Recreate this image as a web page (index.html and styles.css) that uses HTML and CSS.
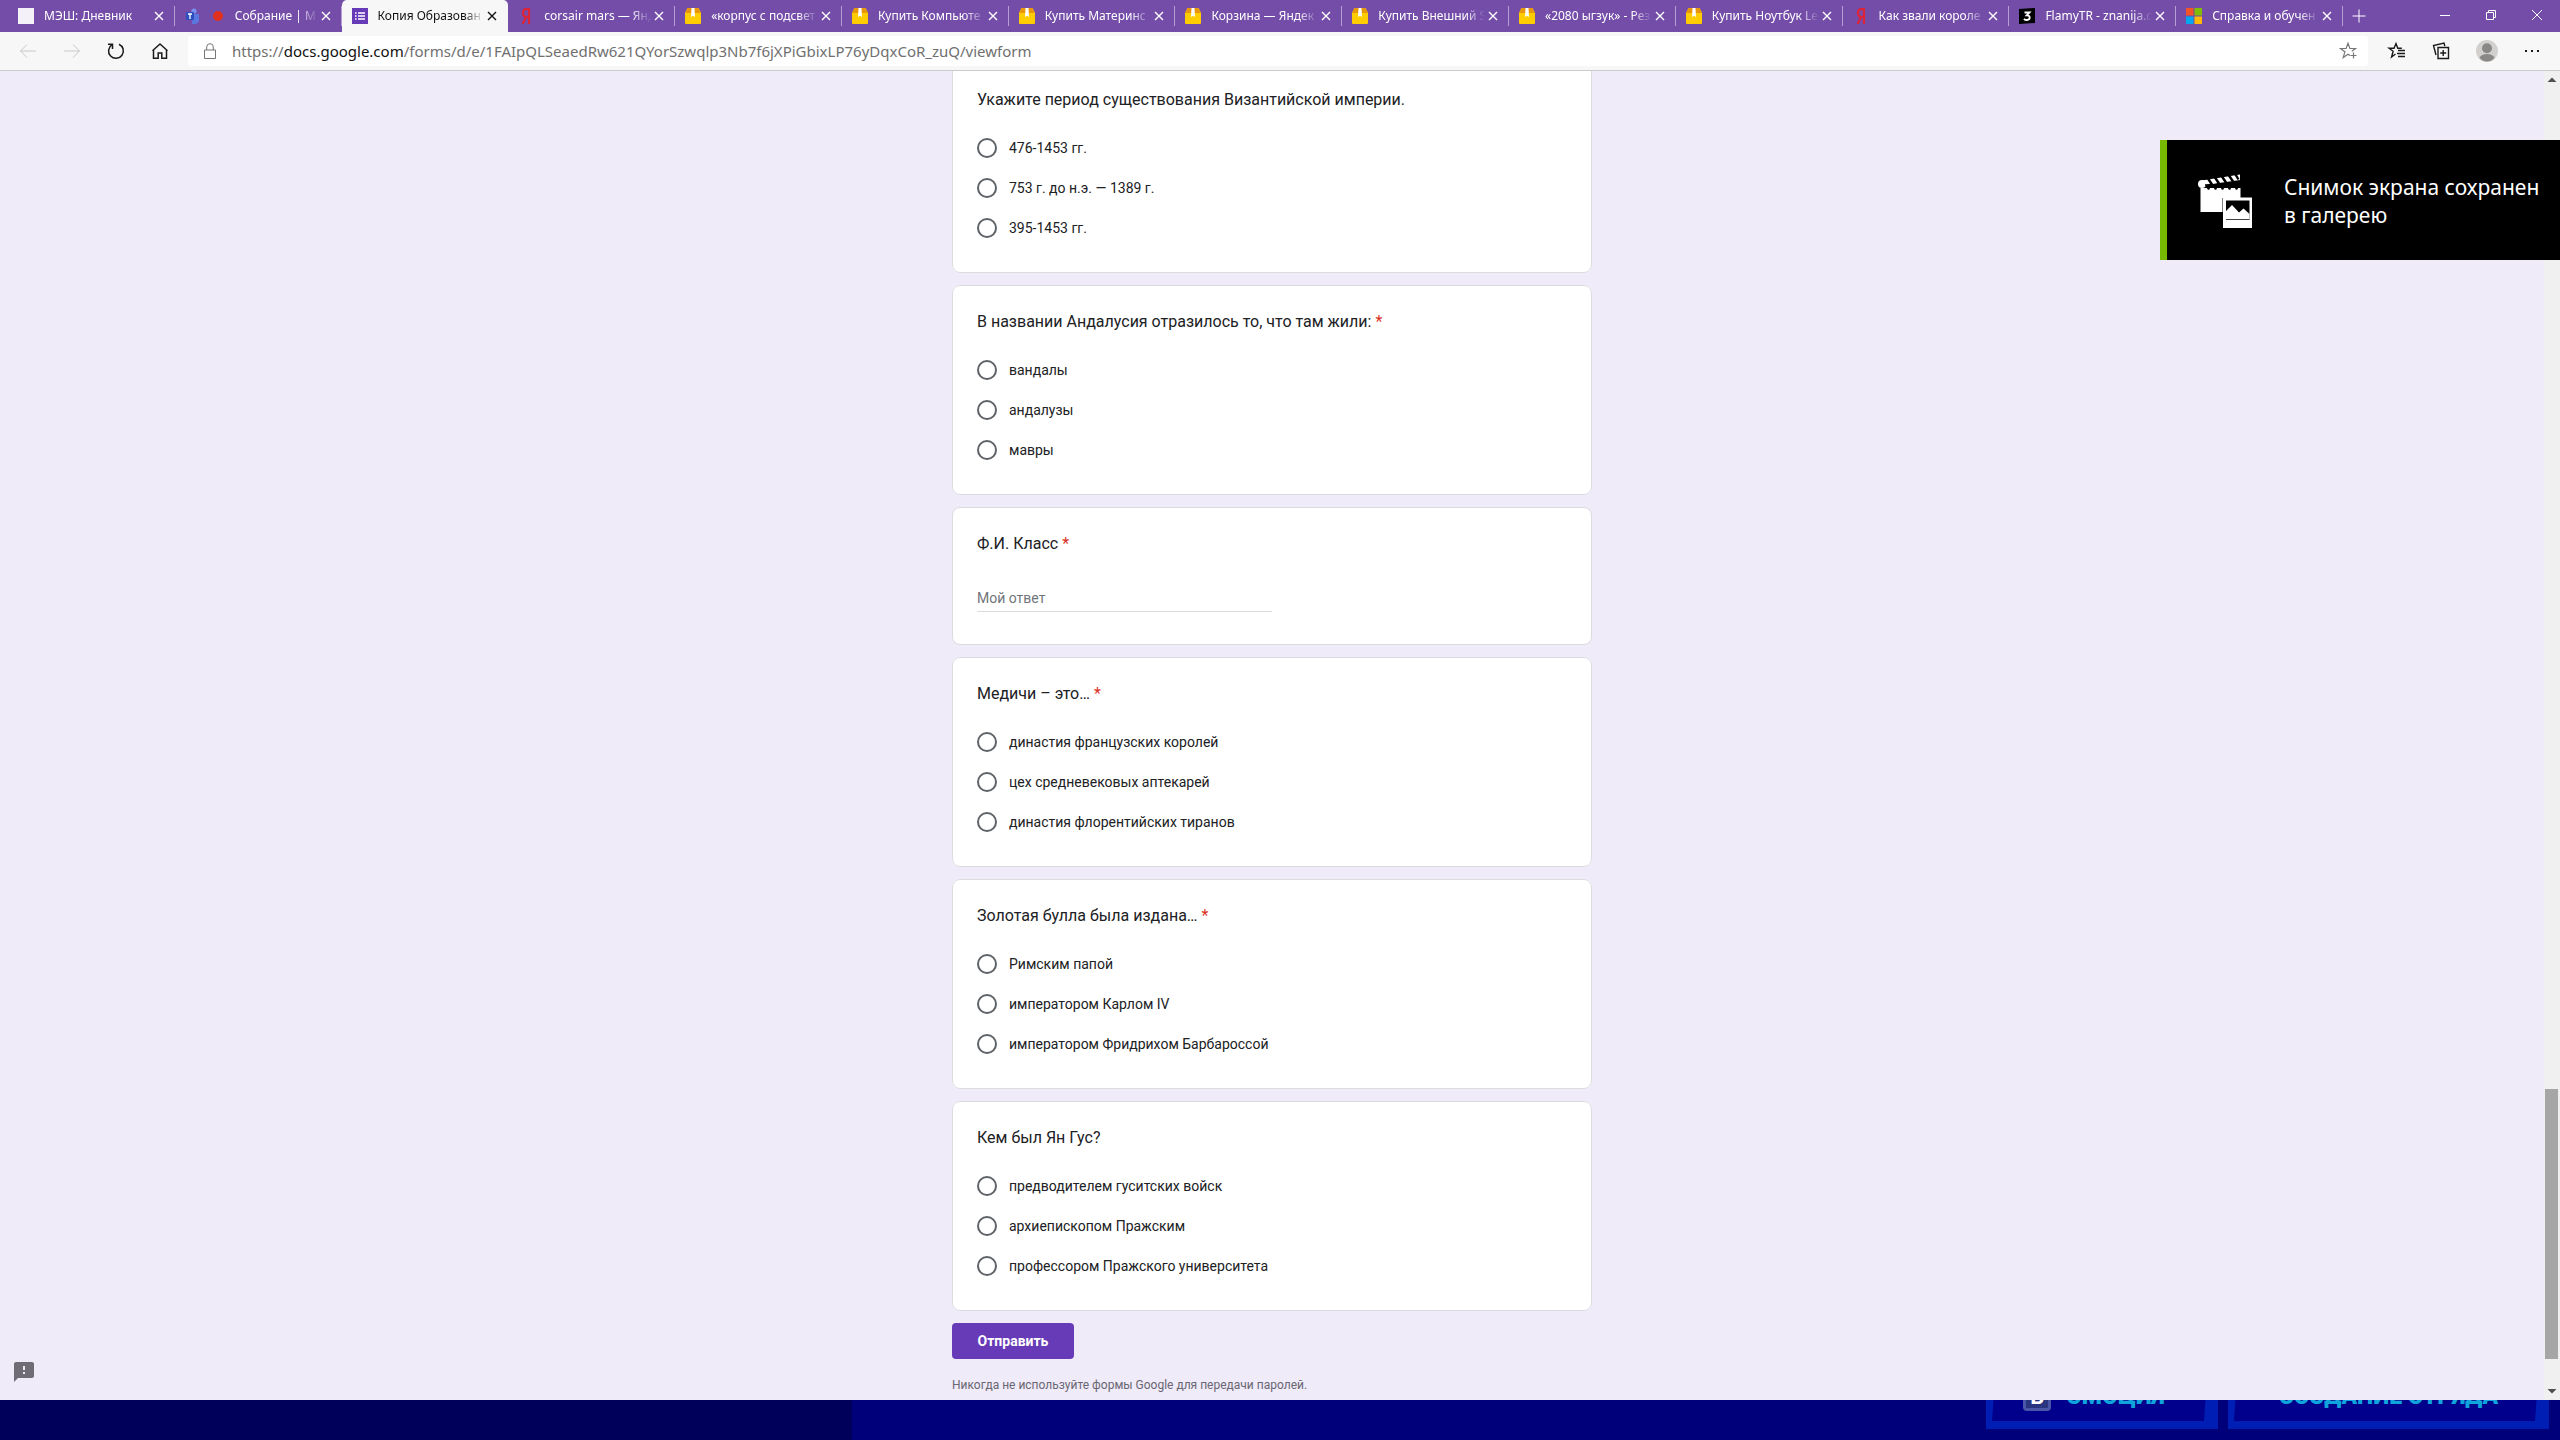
FILE: index.html
```
<!DOCTYPE html>
<html lang="ru">
<head>
<meta charset="utf-8">
<meta name="viewport" content="width=device-width, initial-scale=1">
<title>Копия Образование</title>
<link rel="stylesheet" href="styles.css">
</head>
<body>
<svg class="sprite" aria-hidden="true">
  <symbol id="i-close" viewBox="0 0 16 16"><path d="M4 4l8 8M12 4l-8 8" fill="none" stroke="currentColor" stroke-width="1.4"/></symbol>
  <symbol id="i-box" viewBox="0 0 16 16"><path d="M2.500 0h11L16 5v10q0 1-1 1H1q-1 0-1-1V5z" fill="#fc0"/><path d="M2.500 0h11L16 5H0z" fill="#e8960c"/><path d="M6.500 0h3l.5 9-2-1.200-2 1.200z" fill="#fff"/></symbol>
  <symbol id="i-ya" viewBox="0 0 16 16"><path d="M11 0v16M11 1.200H8.500C6 1.200 5 2.800 5 5s1.500 3.800 3.500 3.800H11M8.200 8.800L4.600 16" fill="none" stroke="#dc2438" stroke-width="2.200"/></symbol>
</svg>

<header class="browser">
  <div class="strip">
    <nav class="tabs" aria-label="Вкладки">
      <div class="tab"><svg class="fav" viewBox="0 0 16 16"><rect width="16" height="16" fill="#f4f1f8"/></svg><a href="#">МЭШ: Дневник</a><button aria-label="Закрыть"><svg><use href="#i-close"/></svg></button></div>
      <div class="tab"><svg class="fav" viewBox="0 0 16 16"><circle cx="9" cy="3" r="2.600" fill="#7b8ff0"/><path d="M8 6h6v6q0 3-4 4H7z" fill="#5b78e0"/><rect x="1" y="4" width="8" height="8" rx="1" fill="#2d4fc0"/><path d="M3 6h4M5 6v5" stroke="#fff" stroke-width="1.300"/></svg><svg class="fav" viewBox="0 0 16 16"><circle cx="9" cy="8" r="5" fill="#e0301e"/></svg><a href="#">Собрание | M</a><button aria-label="Закрыть"><svg><use href="#i-close"/></svg></button></div>
      <div class="tab active"><svg class="fav" viewBox="0 0 16 16"><rect width="16" height="16" fill="#673ab7"/><path d="M6 5h7M6 8h7M6 11h7M3 5h1.600M3 8h1.600M3 11h1.600" stroke="#fff" stroke-width="1.500"/></svg><a href="#">Копия Образован</a><button aria-label="Закрыть"><svg><use href="#i-close"/></svg></button></div>
      <div class="tab"><svg class="fav"><use href="#i-ya"/></svg><a href="#">corsair mars — Янд</a><button aria-label="Закрыть"><svg><use href="#i-close"/></svg></button></div>
      <div class="tab"><svg class="fav"><use href="#i-box"/></svg><a href="#">«корпус с подсвет</a><button aria-label="Закрыть"><svg><use href="#i-close"/></svg></button></div>
      <div class="tab"><svg class="fav"><use href="#i-box"/></svg><a href="#">Купить Компьюте</a><button aria-label="Закрыть"><svg><use href="#i-close"/></svg></button></div>
      <div class="tab"><svg class="fav"><use href="#i-box"/></svg><a href="#">Купить Материнс</a><button aria-label="Закрыть"><svg><use href="#i-close"/></svg></button></div>
      <div class="tab"><svg class="fav"><use href="#i-box"/></svg><a href="#">Корзина — Яндек</a><button aria-label="Закрыть"><svg><use href="#i-close"/></svg></button></div>
      <div class="tab"><svg class="fav"><use href="#i-box"/></svg><a href="#">Купить Внешний S</a><button aria-label="Закрыть"><svg><use href="#i-close"/></svg></button></div>
      <div class="tab"><svg class="fav"><use href="#i-box"/></svg><a href="#">«2080 ыгзук» - Рез</a><button aria-label="Закрыть"><svg><use href="#i-close"/></svg></button></div>
      <div class="tab"><svg class="fav"><use href="#i-box"/></svg><a href="#">Купить Ноутбук Le</a><button aria-label="Закрыть"><svg><use href="#i-close"/></svg></button></div>
      <div class="tab"><svg class="fav"><use href="#i-ya"/></svg><a href="#">Как звали короле</a><button aria-label="Закрыть"><svg><use href="#i-close"/></svg></button></div>
      <div class="tab"><svg class="fav" viewBox="0 0 16 16"><path d="M0 1l16-1v15L0 16z" fill="#000"/><path d="M5.500 4.500h5L7.700 7.300q3 0 3 2.300T8 12q-2 0-3-1.200" fill="none" stroke="#fff" stroke-width="1.800"/></svg><a href="#">FlamyTR - znanija.c</a><button aria-label="Закрыть"><svg><use href="#i-close"/></svg></button></div>
      <div class="tab"><svg class="fav" viewBox="0 0 16 16"><path fill="#f35325" d="M0 0h7.500v7.500H0z"/><path fill="#81bc06" d="M8.500 0H16v7.500H8.500z"/><path fill="#05a6f0" d="M0 8.500h7.500V16H0z"/><path fill="#ffba08" d="M8.500 8.500H16V16H8.500z"/></svg><a href="#">Справка и обучен</a><button aria-label="Закрыть"><svg><use href="#i-close"/></svg></button></div>
    </nav>
    <button class="newtab" aria-label="Новая вкладка"><svg viewBox="0 0 16 16"><path d="M8 1.500v13M1.500 8h13"/></svg></button>
    <div class="wincontrols">
      <button aria-label="Свернуть"><svg viewBox="0 0 16 16"><path d="M3 8.500h10"/></svg></button>
      <button aria-label="Окно"><svg viewBox="0 0 16 16"><path d="M3.500 5.500h7v7h-7zM5.500 5.500v-2h7v7h-2"/></svg></button>
      <button aria-label="Закрыть окно"><svg viewBox="0 0 16 16"><path d="M3 3l10 10M13 3L3 13"/></svg></button>
    </div>
  </div>
  <div class="toolbar">
    <div class="nav">
      <button class="off" aria-label="Назад"><svg viewBox="0 0 20 20"><path d="M18 10H2.500M9 3.500L2.500 10 9 16.500"/></svg></button>
      <button class="off" aria-label="Вперёд"><svg viewBox="0 0 20 20"><path d="M2 10h15.500M11 3.500l6.500 6.500-6.500 6.500"/></svg></button>
      <button aria-label="Обновить"><svg viewBox="0 0 20 20"><path d="M13 3.200A7.400 7.400 0 1 1 6 3.700M6.500 8V3.200H2" stroke-width="1.500"/></svg></button>
      <button aria-label="Домой"><svg viewBox="0 0 20 20"><path d="M3.500 9v8.300h4.700V12h3.600v5.300h4.700V9M2.500 9.800L10 3l7.500 6.800" stroke-width="1.500"/></svg></button>
    </div>
    <div class="address">
      <svg class="lock" viewBox="0 0 20 20"><path d="M4.500 9h11v8.500h-11zM6.700 9V6q0-3.300 3.300-3.300T13.300 6v3"/></svg>
      <div class="url" role="textbox" aria-label="Адрес">https://<b>docs.google.com</b>/forms/d/e/1FAIpQLSeaedRw621QYorSzwqlp3Nb7f6jXPiGbixLP76yDqxCoR_zuQ/viewform</div>
      <button class="star" aria-label="В избранное"><svg viewBox="0 0 20 20"><path d="M12 14.600l-2-1.400L5.200 16.500l1.700-5.700L2.500 7.500h5.600L10 2.200l1.900 5.300h5.600l-3.700 2.800M15.500 11.500v6M12.500 14.500h6" stroke-width="1.200"/></svg></button>
    </div>
    <div class="actions">
      <button aria-label="Избранное"><svg viewBox="0 0 20 20"><path d="M8.500 13L4.600 16l1.500-5.700L2 7.200h5L9 2.500l1.800 4.700h4M11 9.500h7M10 12.500h8M11 15.500h7" stroke-width="1.400"/></svg></button>
      <button aria-label="Коллекции"><svg viewBox="0 0 20 20"><path d="M6 6.500h10.500v11H6zM11.200 9v6M8.200 12h6M4 14L1.500 4.500 12 2l.8 3" stroke-width="1.400"/></svg></button>
      <button aria-label="Профиль"><svg class="avatar" viewBox="0 0 22 22"><circle cx="11" cy="11" r="11" fill="#d2d0ce"/><circle cx="11" cy="8.200" r="5" fill="#8a8886"/><path d="M3.500 17.500q2-3.500 7.500-3.500t7.500 3.500Q16 21.500 11 21.500t-7.500-4z" fill="#8a8886"/></svg></button>
      <button aria-label="Меню"><svg viewBox="0 0 20 20"><path d="M3 10h2M9 10h2M15 10h2" stroke-width="2"/></svg></button>
    </div>
  </div>
</header>

<div class="viewport">
  <main class="page">
    <form class="form">
      <fieldset class="card">
        <legend>Укажите период существования Византийской империи.</legend>
        <label class="option"><input type="radio" name="q1">476-1453 гг.</label>
        <label class="option"><input type="radio" name="q1">753 г. до н.э. — 1389 г.</label>
        <label class="option"><input type="radio" name="q1">395-1453 гг.</label>
      </fieldset>
      <fieldset class="card">
        <legend>В названии Андалусия отразилось то, что там жили: <span class="req">*</span></legend>
        <label class="option"><input type="radio" name="q2">вандалы</label>
        <label class="option"><input type="radio" name="q2">андалузы</label>
        <label class="option"><input type="radio" name="q2">мавры</label>
      </fieldset>
      <div class="card">
        <label class="title" for="fio">Ф.И. Класс <span class="req">*</span></label>
        <input class="answer" id="fio" type="text" placeholder="Мой ответ">
      </div>
      <fieldset class="card">
        <legend>Медичи – это… <span class="req">*</span></legend>
        <label class="option"><input type="radio" name="q4">династия французских королей</label>
        <label class="option"><input type="radio" name="q4">цех средневековых аптекарей</label>
        <label class="option"><input type="radio" name="q4">династия флорентийских тиранов</label>
      </fieldset>
      <fieldset class="card">
        <legend>Золотая булла была издана… <span class="req">*</span></legend>
        <label class="option"><input type="radio" name="q5">Римским папой</label>
        <label class="option"><input type="radio" name="q5">императором Карлом IV</label>
        <label class="option"><input type="radio" name="q5">императором Фридрихом Барбароссой</label>
      </fieldset>
      <fieldset class="card">
        <legend>Кем был Ян Гус?</legend>
        <label class="option"><input type="radio" name="q6">предводителем гуситских войск</label>
        <label class="option"><input type="radio" name="q6">архиепископом Пражским</label>
        <label class="option"><input type="radio" name="q6">профессором Пражского университета</label>
      </fieldset>
      <button class="submit" type="submit">Отправить</button>
      <p class="note">Никогда не используйте формы Google для передачи паролей.</p>
    </form>
    <button class="feedback" aria-label="Сообщить о проблеме"><svg viewBox="0 0 24 24"><path fill="#6f6c76" d="M20 2H4c-1.100 0-2 .9-2 2v18l4-4h14c1.100 0 2-.9 2-2V4c0-1.100-.9-2-2-2zm-7 12h-2v-2h2v2zm0-4h-2V6h2v4z"/></svg></button>
  </main>
  <div class="scrollbar" aria-hidden="true">
    <svg viewBox="0 0 16 17"><path d="M3.500 11L8 6.500l4.500 4.500z"/></svg>
    <div class="track"><div class="thumb"></div></div>
    <svg viewBox="0 0 16 17"><path d="M3.500 6L8 10.500 12.500 6z"/></svg>
  </div>
</div>

<footer class="game">
  <button class="gbtn keyed"><kbd>B</kbd><span>ЭМОЦИЯ</span></button>
  <button class="gbtn wide"><span>СОЗДАНИЕ ОТРЯДА</span></button>
</footer>

<aside class="toast" role="status">
  <svg viewBox="0 0 54 54"><g fill="#fff"><path d="M2.500 14h40v10H24.500v14h-22z"/><circle cx="4" cy="10" r="4"/><path d="M4 6.500L42 .5v5.500L4 11.500z"/><path d="M25 23.500h29V54H25z"/></g><path d="M10 4.500l4 6M17 3.500l4 6M24 2.500l4 6M31 1.500l4 6M37.500.5l3 5M13 9.500l-3 6M20 9.500l-3 6M27 9.500l-3 6M34 9.500l-3 6M41 9.500l-3 6" stroke="#000" stroke-width="2.400"/><path d="M7 11l35-1" stroke="#000" stroke-width="1.500"/><path d="M28 26.500h23.500V46H28z"/><path d="M28 45.200V37l6-6 7 7.500 4.500-4 6 5.500v5.200z" fill="#fff"/></svg>
  <p>Снимок экрана сохранен<br>в галерею</p>
</aside>
</body>
</html>
```
FILE: styles.css
```
* { box-sizing: border-box; }

body {
  margin: 0;
  min-height: 100vh;
  display: flex;
  flex-direction: column;
  position: relative;
  font-family: Roboto, "Liberation Sans", sans-serif;
  background: #00007a;
}

button {
  margin: 0;
  padding: 0;
  border: 0;
  background: none;
  font: inherit;
  color: inherit;
  display: flex;
  align-items: center;
  justify-content: center;
}

.sprite { display: none; }

/* Browser chrome */
.browser {
  font-family: "Noto Sans", "Open Sans", sans-serif;
  background: #f7f7f7;
  border-bottom: 1px solid #cbcacd;
}

.strip {
  display: flex;
  height: 32px;
  padding-left: 8px;
  background: #744da9;
  color: #fff;
}

.tabs {
  flex: 1;
  min-width: 0;
  display: flex;
}

.tab {
  flex: 1 1 0;
  min-width: 0;
  display: flex;
  align-items: center;
  padding: 0 8px 0 10px;
  background: linear-gradient(#b79fd6, #b79fd6) right center / 1px 20px no-repeat;
}

.fav {
  flex: none;
  width: 16px;
  height: 16px;
}

.fav + .fav { margin-left: 8px; }

.tab a {
  flex: 1;
  min-width: 0;
  margin-left: 10px;
  overflow: hidden;
  white-space: nowrap;
  font-size: 12px;
  line-height: 20px;
  color: inherit;
  text-decoration: none;
  mask-image: linear-gradient(to left, transparent, #000 20px);
}

.tab button, .tab button svg {
  flex: none;
  width: 16px;
  height: 16px;
}

.tab.active {
  color: #111;
  background: #f7f7f7;
  border-radius: 5px 5px 0 0;
}

.newtab {
  width: 32px;
  margin-right: 47px;
}

.newtab svg, .wincontrols svg {
  width: 16px;
  height: 16px;
  fill: none;
  stroke: currentColor;
}

.wincontrols { display: flex; height: 30px; }
.wincontrols button { width: 46px; }

.toolbar {
  display: flex;
  height: 38px;
  align-items: center;
  padding: 0 6px;
}

.nav, .actions { display: flex; }
.nav button { width: 44px; }
.actions button { width: 45px; }

.toolbar svg {
  width: 20px;
  height: 20px;
  fill: none;
  stroke: #1a1a1a;
}

.toolbar .avatar {
  width: 22px;
  height: 22px;
  stroke: none;
}

.toolbar .off svg { stroke: #c8c8c8; }

.address {
  flex: 1;
  min-width: 0;
  height: 30px;
  margin: 0 6px;
  padding: 0 10px 0 12px;
  display: flex;
  align-items: center;
  background: #fff;
  border-radius: 3px;
}

.toolbar .address svg { stroke: #767676; }

.url {
  flex: 1;
  min-width: 0;
  margin-left: 12px;
  overflow: hidden;
  white-space: nowrap;
  font-size: 15px;
  line-height: 24px;
  color: #707070;
}

.url b { font-weight: 400; color: #111; }

/* Page area */
.viewport {
  flex: 1;
  display: flex;
  overflow: hidden;
  background: #efebf8;
}

.page {
  flex: 1;
  position: relative;
}

.form {
  max-width: 640px;
  margin: -8px auto 0;
  display: flex;
  flex-direction: column;
  gap: 12px;
}

.card {
  margin: 0;
  min-width: 0;
  padding: 24px;
  background: #fff;
  border: 1px solid #dadce0;
  border-radius: 8px;
  font-size: 14px;
  color: #202124;
}

.card legend, .title {
  display: block;
  float: left;
  width: 100%;
  padding: 0;
  margin-bottom: 16px;
  font-size: 16px;
  line-height: 24px;
}

.req { color: #d93025; }

.option {
  clear: both;
  height: 40px;
  display: flex;
  align-items: center;
  gap: 12px;
}

.option input {
  appearance: none;
  flex: none;
  width: 20px;
  height: 20px;
  margin: 0;
  border: 2px solid #5f6368;
  border-radius: 50%;
}

.answer {
  display: block;
  clear: both;
  width: 50%;
  height: 40px;
  margin: 0 0 8px;
  padding: 12px 0 0;
  border: 0;
  border-bottom: 1px solid #dadce0;
  background: none;
  font: 14px/24px Roboto, sans-serif;
}

.answer::placeholder { color: #70757a; opacity: 1; }

.submit {
  align-self: flex-start;
  min-width: 122px;
  height: 36px;
  padding: 0 24px;
  border-radius: 4px;
  background: #673ab7;
  color: #fff;
  font-size: 14px;
  font-weight: 700;
}

.note {
  margin: 5px 0 0;
  font-size: 12px;
  line-height: 18px;
  color: #6a6672;
}

.feedback {
  position: absolute;
  left: 12px;
  bottom: 16px;
}

.feedback svg { width: 24px; height: 24px; }

.scrollbar {
  width: 16px;
  display: flex;
  flex-direction: column;
  background: #f0f0f0;
}

.scrollbar svg { height: 17px; fill: #505050; }

.track {
  flex: 1;
  display: flex;
  flex-direction: column;
  padding: 0 2px 0 1px;
}

.track::before { content: ""; flex: 1001; }
.track::after { content: ""; flex: 24; }
.thumb { flex: 270; background: #a6a6a6; }

/* Game window visible below the browser */
.game {
  height: 40px;
  display: flex;
  justify-content: flex-end;
  align-items: flex-end;
  gap: 10px;
  padding: 0 11px 11px 0;
  overflow: hidden;
  background: linear-gradient(to right, #00005a 33.3%, #00007a 33.3%);
}

.gbtn {
  position: relative;
  z-index: 0;
  flex: none;
  width: 232px;
  height: 64px;
  gap: 16px;
  background: #001eb4;
  color: #0fa5dc;
  font-size: 23px;
  font-weight: 900;
  line-height: 28px;
}

.gbtn.keyed { padding-right: 16px; }
.gbtn.wide { width: 321px; }

.gbtn::before {
  content: "";
  position: absolute;
  z-index: -1;
  inset: 0 10px 8px 6px;
  background: #00008c;
  clip-path: polygon(4px 0, 100% 0, calc(100% - 4px) 100%, 0 100%);
}

.gbtn kbd {
  width: 28px;
  height: 28px;
  border: 3px solid #4a57a8;
  border-radius: 4px;
  background: #2a3580;
  color: #fff;
  font: 700 22px/22px Roboto, sans-serif;
}

/* Capture notification */
.toast {
  position: absolute;
  top: 140px;
  right: 0;
  width: 400px;
  height: 120px;
  display: flex;
  align-items: center;
  gap: 32px;
  padding: 2px 12px 0 31px;
  border-left: 7px solid #76b900;
  background: #000;
  color: #fff;
}

.toast svg { flex: none; width: 54px; height: 54px; }

.toast p {
  margin: 0;
  white-space: nowrap;
  font: 21px/28px "Noto Sans", "Open Sans", sans-serif;
}
```
